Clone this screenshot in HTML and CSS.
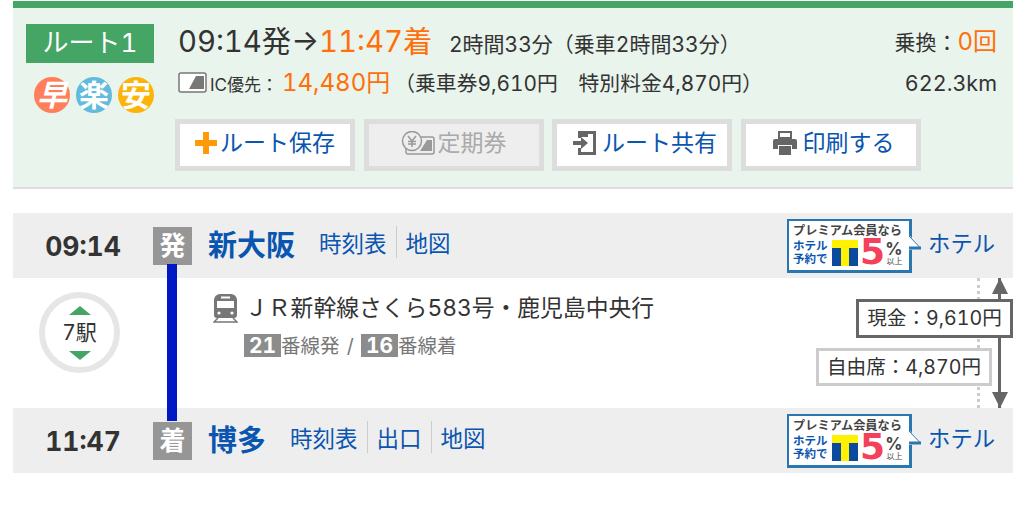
FILE: index.html
```html
<!DOCTYPE html>
<html lang="ja">
<head>
    <meta charset="UTF-8">
    <title>ルート1</title>
    <link rel="stylesheet" href="styles.css">
</head>
<body>
    <svg class="defs" width="0" height="0">
        <symbol id="promo-tail" viewBox="0 0 16 16">
            <path d="M0 0 L4 0 L14 11 L14 12 L4 14 L0 14 Z" fill="#fff"/>
            <path d="M3 0 L14 11.500" fill="none" stroke="#2a76b0" stroke-width="1"/>
            <path d="M3 12 H15" fill="none" stroke="#2a76b0" stroke-width="3"/>
        </symbol>
        <symbol id="t-logo" viewBox="0 0 26 26">
            <rect width="26" height="26" fill="#0b4a9e"/>
            <rect width="26" height="8" fill="#fff200"/>
            <rect x="9" width="8" height="26" fill="#fff200"/>
        </symbol>
    </svg>

    <section class="summary">
        <div class="summary-left">
            <div class="route-label">ルート1</div>
            <div class="marks">
                <span class="mark mark-fast">早</span>
                <span class="mark mark-easy">楽</span>
                <span class="mark mark-cheap">安</span>
            </div>
        </div>
        <div class="summary-main">
            <div class="info-row">
                <div class="times">09:14発→<span class="accent">11:47着</span></div>
                <div class="duration">2時間33分（乗車2時間33分）</div>
                <div class="transfer">乗換：<span class="accent">0回</span></div>
            </div>
            <div class="info-row fare-row">
                <svg class="ic-icon" width="29" height="21" viewBox="0 0 29 21">
                    <rect x="1" y="1" width="27" height="19" rx="2" fill="#fff" stroke="#777" stroke-width="1.5"/>
                    <path d="M11 17 L18 4 H26 V17 Z" fill="#777"/>
                </svg>
                <span class="ic-label">IC優先：</span>
                <span class="fare accent">14,480円</span>
                <span class="fare-detail">（乗車券9,610円　特別料金4,870円）</span>
                <span class="distance">622.3km</span>
            </div>
            <div class="actions">
                <a class="action">
                    <svg width="22" height="22" viewBox="0 0 22 22"><path d="M8 0h6v8h8v6h-8v8H8v-8H0V8h8z" fill="#ff9a0a"/></svg>
                    ルート保存
                </a>
                <a class="action action-off">
                    <svg width="34" height="24" viewBox="0 0 34 24">
                        <rect x="5" y="6" width="28" height="17" rx="2" fill="#eee" stroke="#999" stroke-width="1.5"/>
                        <path d="M19 20 L26 9 H31 V20 Z" fill="#999"/>
                        <circle cx="11" cy="10" r="9.5" fill="#eee" stroke="#999" stroke-width="1.5"/>
                        <path d="M7 5l4 5 4-5M11 10v6M7 10.5h8M7 13h8" fill="none" stroke="#999" stroke-width="1.5"/>
                    </svg>
                    定期券
                </a>
                <a class="action action-wide">
                    <svg width="23" height="24" viewBox="0 0 23 24">
                        <path d="M5 0h18v24H5v-7h3v4h12V3H8v4H5z" fill="#666"/>
                        <path d="M8 0l7 3v3H8z" fill="#666"/>
                        <path d="M0 10h8V6l7 6-7 6v-4H0z" fill="#666"/>
                    </svg>
                    ルート共有
                </a>
                <a class="action action-wide">
                    <svg width="24" height="24" viewBox="0 0 24 24">
                        <path d="M6 1h12v6H6z" fill="none" stroke="#666" stroke-width="2"/>
                        <path d="M2 8h20a2 2 0 0 1 2 2v8h-5v-4H5v4H0v-8a2 2 0 0 1 2-2z" fill="#666"/>
                        <path d="M6 15h12v9H6z" fill="#666"/>
                    </svg>
                    印刷する
                </a>
            </div>
        </div>
    </section>

    <section class="route">
        <div class="stop">
            <div class="stop-time">09:14</div>
            <div class="stop-tag">発</div>
            <div class="stop-name">新大阪</div>
            <div class="stop-links links-first"><a>時刻表</a><a>地図</a></div>
            <div class="hotel">
                <div class="promo">
                    <div class="promo-title">プレミアム会員なら</div>
                    <div class="promo-body">
                        <div class="promo-text">ホテル<br>予約で</div>
                        <svg class="promo-logo" width="26" height="26"><use href="#t-logo"/></svg>
                        <div class="promo-five">5</div>
                        <div class="promo-pct"><b>%</b><small>以上</small></div>
                    </div>
                    <svg class="promo-tail" width="16" height="16"><use href="#promo-tail"/></svg>
                </div>
                <a class="hotel-link">ホテル</a>
            </div>
        </div>

        <div class="leg">
            <div class="leg-count">
                <div class="stations">
                    <i class="tri-up"></i>
                    <span>7駅</span>
                    <i class="tri-down"></i>
                </div>
            </div>
            <div class="leg-info">
                <div class="train">
                    <svg width="25" height="29" viewBox="0 0 25 29">
                        <path d="M7 0h11a6 6 0 0 1 6 6v15a3 3 0 0 1-3 3H4a3 3 0 0 1-3-3V6a6 6 0 0 1 6-6z" fill="#777"/>
                        <rect x="4" y="7" width="17" height="7" fill="#fff"/>
                        <rect x="8" y="2.500" width="9" height="2" fill="#fff"/>
                        <circle cx="6" cy="19" r="1.600" fill="#fff"/>
                        <circle cx="19" cy="19" r="1.600" fill="#fff"/>
                        <path d="M5 24 L1 28H24L20 24" fill="none" stroke="#777" stroke-width="1.500"/>
                    </svg>
                    <span>ＪＲ新幹線さくら583号・鹿児島中央行</span>
                </div>
                <div class="platforms">
                    <b>21</b>番線発 / <b>16</b>番線着
                </div>
            </div>
            <i class="fare-dots"></i>
            <i class="fare-arrow"></i>
            <div class="fare-box fare-cash">現金：9,610円</div>
            <div class="fare-box fare-seat">自由席：4,870円</div>
        </div>

        <div class="stop">
            <div class="stop-time">11:47</div>
            <div class="stop-tag">着</div>
            <div class="stop-name">博多</div>
            <div class="stop-links"><a>時刻表</a><a>出口</a><a>地図</a></div>
            <div class="hotel">
                <div class="promo">
                    <div class="promo-title">プレミアム会員なら</div>
                    <div class="promo-body">
                        <div class="promo-text">ホテル<br>予約で</div>
                        <svg class="promo-logo" width="26" height="26"><use href="#t-logo"/></svg>
                        <div class="promo-five">5</div>
                        <div class="promo-pct"><b>%</b><small>以上</small></div>
                    </div>
                    <svg class="promo-tail" width="16" height="16"><use href="#promo-tail"/></svg>
                </div>
                <a class="hotel-link">ホテル</a>
            </div>
        </div>
        <i class="route-line"></i>
    </section>
</body>
</html>
```

FILE: styles.css
```css
body {
    margin: 0;
    padding: 1px 11px 0 13px;
    background-color: white;
    color: #333;
    font-family: Inter, "Noto Sans CJK JP", sans-serif;
    font-variant-numeric: tabular-nums;
    overflow: hidden;
}

.defs {
    position: absolute;
}

.accent {
    color: #ff6f0a;
}

/* summary panel */
.summary {
    display: flex;
    height: 179px;
    border-top: 7px solid #44a565;
    border-bottom: 2px solid #ddd;
    background-color: #e9f4ec;
}

.summary-left {
    display: flex;
    flex-direction: column;
    align-items: flex-end;
    width: 141px;
    padding-top: 16px;
}

.route-label {
    width: 128px;
    height: 39px;
    background-color: #44a565;
    color: white;
    font-size: 26px;
    line-height: 38px;
    text-align: center;
}

.marks {
    display: flex;
    gap: 6px;
    margin-top: 14px;
}

.mark {
    width: 36px;
    height: 36px;
    border-radius: 50%;
    color: white;
    font-size: 30px;
    font-weight: bold;
    line-height: 36px;
    text-align: center;
}

.mark-fast {
    background-color: #ff7f5a;
    font-style: italic;
}

.mark-easy {
    background-color: #62bbdc;
}

.mark-cheap {
    background-color: #fdb40a;
}

.summary-main {
    flex: 1;
    padding: 10px 16px 0 24px;
}

.info-row {
    display: flex;
    align-items: baseline;
    height: 45px;
    font-size: 21px;
}

.times {
    font-size: 29.3px;
    width: 271px;
    white-space: nowrap;
}

.duration {
    flex: 1;
}

.fare-row {
    height: 38px;
    font-size: 20.8px;
}

.ic-icon {
    align-self: center;
    margin-right: 3px;
}

.ic-label {
    margin-right: 4px;
    font-size: 17px;
}

.fare {
    margin-right: 4px;
    font-size: 24px;
}

.fare-detail {
    flex: 1;
}

.transfer {
    align-self: flex-start;
    margin-top: 10px;
    line-height: 28px;
}

.transfer .accent {
    font-size: 24px;
}

.distance {
    font-size: 21.5px;
}

.actions {
    display: flex;
    gap: 8.5px;
    margin: 18px 0 0 -3px;
}

.action {
    display: flex;
    align-items: center;
    justify-content: center;
    gap: 3px;
    box-sizing: border-box;
    width: 180px;
    height: 52px;
    padding-bottom: 8px;
    border: 5px solid #ddd;
    background-color: white;
    color: #0a55b0;
    font-size: 23px;
}

.action svg {
    margin-top: 4px;
}

.action-off {
    background-color: #eee;
    color: #aaa;
}

.action-wide {
    gap: 6px;
    padding-left: 6px;
}

/* route table */
.route {
    position: relative;
    margin-top: 24px;
}

.stop {
    display: flex;
    align-items: center;
    height: 65px;
    background-color: #eee;
}

.stop-time {
    width: 140px;
    color: #333;
    font-size: 26.5px;
    font-weight: bold;
    text-align: center;
}

.stop-tag {
    width: 39px;
    height: 38px;
    background-color: #969696;
    color: white;
    font-size: 26px;
    font-weight: bold;
    line-height: 38px;
    text-align: center;
}

.stop-name {
    margin: 0 0 6px 16px;
    color: #0a55b0;
    font-size: 29px;
    font-weight: bold;
}

.stop-links {
    display: flex;
    margin: 0 0 7px 24px;
    color: #0a55b0;
    font-size: 22.5px;
}

.stop-links a + a {
    margin-left: 9px;
    padding-left: 9px;
    border-left: 1px solid #ccc;
}

.hotel {
    display: flex;
    align-items: center;
    margin-left: auto;
    margin-right: 18px;
}

.hotel-link {
    margin-bottom: 7px;
    color: #0a55b0;
    font-size: 22.3px;
}

.promo {
    position: relative;
    box-sizing: border-box;
    width: 125px;
    height: 54px;
    margin-right: 16px;
    border: 1px solid #2a76b0;
    border-width: 2px 3px 3px 2px;
    background-color: white;
    padding: 2px 4px;
}

.promo-title {
    color: #444;
    font-size: 12.2px;
    font-weight: bold;
    line-height: 15px;
    white-space: nowrap;
}

.promo-body {
    display: flex;
    align-items: flex-end;
}

.promo-text {
    width: 39px;
    color: #0a55b0;
    font-size: 11.5px;
    font-weight: bold;
    line-height: 13px;
    white-space: nowrap;
}

.promo-five {
    margin-left: 2px;
    color: #f5405b;
    font-family: "DejaVu Sans", sans-serif;
    font-size: 36px;
    font-weight: bold;
    line-height: 28px;
}

.promo-pct {
    display: flex;
    flex-direction: column;
    align-items: flex-end;
    color: #444;
    line-height: 1;
}

.promo-pct b {
    font-size: 17px;
    line-height: 15px;
}

.promo-pct small {
    font-size: 8px;
    line-height: 9px;
}

.promo-tail {
    position: absolute;
    top: 15px;
    left: 100%;
    margin-left: -3px;
}

.leg {
    position: relative;
    display: flex;
    height: 130px;
}

.leg-count {
    width: 140px;
    padding-top: 14px;
}

.stations {
    display: flex;
    flex-direction: column;
    align-items: center;
    justify-content: center;
    gap: 5px;
    box-sizing: border-box;
    width: 81px;
    height: 81px;
    margin-left: 26px;
    border: 6px solid #e6e6e6;
    border-radius: 50%;
    font-size: 21px;
    line-height: 26px;
}

.tri-up,
.tri-down {
    width: 0;
    height: 0;
    border-left: 11px solid transparent;
    border-right: 11px solid transparent;
}

.tri-up {
    border-bottom: 9px solid #44a565;
}

.tri-down {
    border-top: 9px solid #44a565;
}

.leg-info {
    padding: 16px 0 0 60px;
}

.train {
    display: flex;
    align-items: flex-start;
    gap: 7px;
    font-size: 22.8px;
    line-height: 28px;
}

.platforms {
    margin: 7px 0 0 31px;
    color: #777;
    font-size: 19.5px;
    word-spacing: 2px;
}

.platforms b {
    display: inline-block;
    width: 37px;
    background-color: #8c8c8c;
    color: white;
    font-size: 21px;
    line-height: 23px;
    text-align: center;
}

.fare-dots {
    position: absolute;
    top: 0;
    bottom: 0;
    left: 964px;
    border-left: 3px dotted #ccc;
}

.fare-arrow {
    position: absolute;
    top: 0;
    bottom: 0;
    left: 985px;
    width: 3px;
    background-color: #666;
}

.fare-arrow::before,
.fare-arrow::after {
    content: "";
    position: absolute;
    left: -6.5px;
    border-left: 8px solid transparent;
    border-right: 8px solid transparent;
}

.fare-arrow::before {
    top: 0;
    border-bottom: 16px solid #666;
}

.fare-arrow::after {
    bottom: 0;
    border-top: 16px solid #666;
}

.fare-box {
    position: absolute;
    box-sizing: border-box;
    background-color: white;
    font-size: 19.6px;
    text-align: center;
    white-space: nowrap;
}

.fare-cash {
    top: 21px;
    right: 0;
    width: 157px;
    height: 39px;
    border: 3px solid #666;
    line-height: 33px;
}

.fare-seat {
    top: 70px;
    left: 803px;
    width: 176px;
    height: 38px;
    border: 3px solid #ccc;
    line-height: 32px;
}

.route-line {
    position: absolute;
    top: 51px;
    left: 154px;
    width: 10px;
    height: 157px;
    background-color: #0019c4;
}
```
